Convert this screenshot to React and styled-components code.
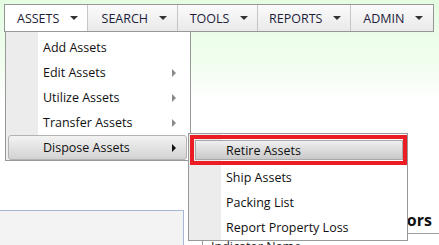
import React from 'react'
import styled, { createGlobalStyle } from 'styled-components'

const GlobalStyle = createGlobalStyle`
  html, body {
    margin: 0;
    padding: 0;
  }
  body {
    width: 439px;
    height: 245px;
    overflow: hidden;
    font-family: "Open Sans", "Noto Sans", sans-serif;
    font-size: 12.5px;
    color: #111;
    background: linear-gradient(to bottom, #e4fde1 0px, #f3fef1 70px, #ffffff 100px);
  }
`

const Page = styled.div`
  padding-top: 4px;
  height: 245px;
  box-sizing: border-box;
  overflow: hidden;
`

const NavBar = styled.ul`
  display: flex;
  margin: 0 5px 0 4px;
  padding: 0;
  list-style: none;
  border: 1px solid #959595;
  height: 26px;
`

const NavItem = styled.li`
  position: relative;
  flex: ${p => p.$grow || 1} 1 0;
  display: flex;
  align-items: center;
  justify-content: center;
  gap: 11px;
  padding-left: 3px;
  color: #1d1d3a;
  background: ${p => (p.$active ? '#ffffff' : 'linear-gradient(to bottom, #fbfbfb, #e9e9e9)')};
  border-left: ${p => (p.$first ? 'none' : '1px solid #c6c6c6')};
  cursor: default;
`

const Caret = styled.span`
  width: 0;
  height: 0;
  border-left: 4px solid transparent;
  border-right: 4px solid transparent;
  border-top: 4px solid #333;
`

const Dropdown = styled.ul`
  position: absolute;
  top: 26px;
  left: 0;
  z-index: 10;
  width: 184px;
  margin: 0;
  padding: 3px 0 0;
  list-style: none;
  border: 1px solid #999;
  background: linear-gradient(to right, #ececec 32px, #ffffff 32px);
`

const MenuItem = styled.li`
  position: relative;
  display: flex;
  align-items: center;
  justify-content: space-between;
  height: 25px;
  box-sizing: border-box;
  margin: 0 3px 0 2px;
  padding: 0 10px 0 34px;
  border: 1px solid ${p => (p.$active ? '#b3b3b3' : 'transparent')};
  border-radius: 3px;
  background: ${p => (p.$active ? 'linear-gradient(to bottom, #f3f3f3, #d2d2d2)' : 'transparent')};
  color: #111;
  white-space: nowrap;
`

const SubArrow = styled.span`
  width: 0;
  height: 0;
  border-top: 4px solid transparent;
  border-bottom: 4px solid transparent;
  border-left: 4px solid ${p => (p.$dark ? '#111' : '#8a8a8a')};
`

const Flyout = styled.ul`
  position: absolute;
  top: -3px;
  left: 179px;
  z-index: 11;
  width: 218px;
  margin: 0;
  padding: 1px 0 0;
  list-style: none;
  border: 1px solid #999;
  background: linear-gradient(to right, #ececec 32px, #ffffff 32px);
`

const FlyItem = styled.li`
  display: flex;
  align-items: center;
  height: 25px;
  padding-left: 37px;
  white-space: nowrap;
`

const Marked = styled.li`
  margin: 0 0 0 1px;
  border: 4px solid #ec1c24;
  height: 30px;
  box-sizing: border-box;
  padding: 1px 0 1px 1px;
`

const MarkedInner = styled.div`
  display: flex;
  align-items: center;
  height: 100%;
  box-sizing: border-box;
  padding-left: 30px;
  border: 1px solid #a9a9a9;
  background: linear-gradient(to bottom, #efefef, #c9c9c9);
`

const Content = styled.div`
  display: grid;
  grid-template-columns: 184px 1fr;
  column-gap: 16px;
  margin-top: 178px;
`

const SidePanel = styled.div`
  height: 60px;
  border: 1px solid #a8b7d8;
  border-left: none;
  background: #f3f3f3;
`

const KpiPanel = styled.div`
  display: flex;
  flex-direction: column;
`

const KpiTitle = styled.h2`
  margin: 0;
  padding: 0 0 2px 10px;
  font-size: 16px;
  font-weight: 700;
  line-height: 21px;
  color: #111;
  white-space: nowrap;
  border-bottom: 1px solid #9c9c9c;
`

const KpiTable = styled.div`
  margin-left: 2px;
  margin-top: 5px;
  border-left: 1px solid #9c9c9c;
  padding: 0 8px;
  color: #222;
  font-size: 12.5px;
  line-height: 16px;
`

const disposeItems = ['Retire Assets', 'Ship Assets', 'Packing List', 'Report Property Loss']

export default function App() {
  return (
    <>
      <GlobalStyle />
      <Page>
        <NavBar>
          <NavItem $active $first $grow={83}>
            ASSETS <Caret />
            <Dropdown>
              <MenuItem>Add Assets</MenuItem>
              <MenuItem>Edit Assets <SubArrow /></MenuItem>
              <MenuItem>Utilize Assets <SubArrow /></MenuItem>
              <MenuItem>Transfer Assets <SubArrow /></MenuItem>
              <MenuItem $active>
                Dispose Assets <SubArrow $dark />
                <Flyout>
                  <Marked>
                    <MarkedInner>{disposeItems[0]}</MarkedInner>
                  </Marked>
                  {disposeItems.slice(1).map(label => (
                    <FlyItem key={label}>{label}</FlyItem>
                  ))}
                </Flyout>
              </MenuItem>
            </Dropdown>
          </NavItem>
          <NavItem $grow={90}>SEARCH <Caret /></NavItem>
          <NavItem $grow={79}>TOOLS <Caret /></NavItem>
          <NavItem $grow={93}>REPORTS <Caret /></NavItem>
          <NavItem $grow={83}>ADMIN <Caret /></NavItem>
        </NavBar>
        <Content>
          <SidePanel />
          <KpiPanel>
            <KpiTitle>Key Performance Indicators</KpiTitle>
            <KpiTable>Indicator Name</KpiTable>
          </KpiPanel>
        </Content>
      </Page>
    </>
  )
}
